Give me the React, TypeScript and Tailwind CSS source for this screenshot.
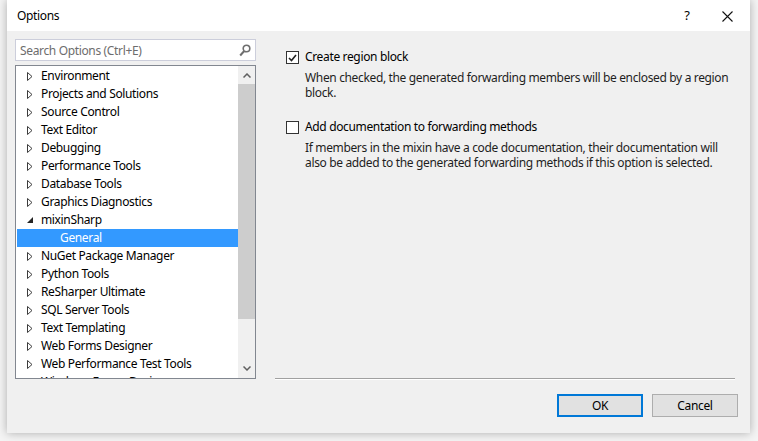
import React from 'react';

const font = { fontFamily: '"Noto Sans", "Open Sans", sans-serif' };

const items = [
  { name: 'Environment' },
  { name: 'Projects and Solutions' },
  { name: 'Source Control' },
  { name: 'Text Editor' },
  { name: 'Debugging' },
  { name: 'Performance Tools' },
  { name: 'Database Tools' },
  { name: 'Graphics Diagnostics' },
  { name: 'mixinSharp', open: true },
  { name: 'General', child: true, selected: true },
  { name: 'NuGet Package Manager' },
  { name: 'Python Tools' },
  { name: 'ReSharper Ultimate' },
  { name: 'SQL Server Tools' },
  { name: 'Text Templating' },
  { name: 'Web Forms Designer' },
  { name: 'Web Performance Test Tools' },
  { name: 'Windows Forms Designer' },
];

const Closed = () => (
  <svg width="6" height="9" viewBox="0 0 6 9" className="shrink-0">
    <path d="M0.5 0.5 L5 4.5 L0.5 8.5 Z" fill="none" stroke="#3c3c3c" strokeWidth="1" />
  </svg>
);

const Open = () => (
  <svg width="6" height="6" viewBox="0 0 6 6" className="shrink-0">
    <path d="M6 0 L6 6 L0 6 Z" fill="#262626" />
  </svg>
);

const Checkbox: React.FC<{ checked?: boolean }> = ({ checked }) => (
  <div className="w-[13px] h-[13px] shrink-0 border border-[#333333] bg-white flex items-center justify-center mt-[2px]">
    {checked && (
      <svg width="9" height="8" viewBox="0 0 9 8">
        <path d="M1 4 L3.5 6.5 L8 1" fill="none" stroke="#222" strokeWidth="1.6" />
      </svg>
    )}
  </div>
);

export default function App() {
  return (
    <div className="w-[758px] h-[441px] bg-[#f4f4f4] text-[12px] tracking-[-0.35px] text-black" style={font}>
      <div className="ml-[7px] w-[743px] h-[433px] bg-[#f0f0f0] flex flex-col shadow-[0_0_9px_rgba(0,0,0,0.3)]">
        {/* Title bar */}
        <div className="h-[31px] bg-white flex items-center pt-[1px] shrink-0">
          <span className="pl-[10px] flex-1">Options</span>
          <span className="w-[20px] text-center mr-[25px] text-[13px]">?</span>
          <svg width="11" height="11" viewBox="0 0 11 11" className="mr-[17px]">
            <path d="M0.5 0.5 L10.5 10.5 M10.5 0.5 L0.5 10.5" stroke="#111" strokeWidth="1.1" />
          </svg>
        </div>

        <div className="flex flex-1 min-h-0">
          {/* Left column */}
          <div className="ml-[8px] w-[241px] pt-[8px] flex flex-col gap-[4px]">
            <div className="h-[22px] border border-[#cccedb] bg-white flex items-center pl-[4px] pr-[4px] pt-[1px]">
              <span className="flex-1 text-[#6d6d6d]">Search Options (Ctrl+E)</span>
              <svg width="12" height="13" viewBox="0 0 12 13">
                <circle cx="7.5" cy="4.5" r="3.3" fill="none" stroke="#6f6f6f" strokeWidth="1.6" />
                <path d="M5.2 7 L1.2 11.5" stroke="#6f6f6f" strokeWidth="2" />
              </svg>
            </div>
            <div className="h-[314px] border border-[#828790] bg-white flex overflow-hidden">
              <div className="flex-1 pt-[1px] pl-[1px] overflow-hidden">
                {items.map((it) => (
                  <div
                    key={it.name}
                    className={`h-[18px] flex items-center whitespace-nowrap ${it.selected ? 'bg-[#3399ff] text-white' : ''}`}
                  >
                    {it.child ? (
                      <span className="pl-[43px]">{it.name}</span>
                    ) : (
                      <>
                        <span className="w-[24px] flex justify-end pr-[8px] items-center">
                          {it.open ? <Open /> : <Closed />}
                        </span>
                        <span>{it.name}</span>
                      </>
                    )}
                  </div>
                ))}
              </div>
              {/* Scrollbar */}
              <div className="w-[17px] bg-[#f0f0f0] flex flex-col items-center shrink-0">
                <div className="h-[18px] flex items-center justify-center">
                  <svg width="8" height="5" viewBox="0 0 8 5">
                    <path d="M0.5 4.5 L4 1 L7.5 4.5" fill="none" stroke="#606060" strokeWidth="1.5" />
                  </svg>
                </div>
                <div className="w-[17px] h-[235px] bg-[#cdcdcd]" />
                <div className="flex-1" />
                <div className="h-[18px] flex items-center justify-center mb-[1px]">
                  <svg width="8" height="5" viewBox="0 0 8 5">
                    <path d="M0.5 0.5 L4 4 L7.5 0.5" fill="none" stroke="#606060" strokeWidth="1.5" />
                  </svg>
                </div>
              </div>
            </div>
          </div>

          {/* Right column */}
          <div className="ml-[19px] flex-1 flex flex-col">
            <div className="flex-1 pl-[11px] pt-[18px] leading-[15px] text-[#1e1e1e]">
              <div className="flex gap-[6px]">
                <Checkbox checked />
                <div className="flex flex-col gap-[6px]">
                  <span className="text-black">Create region block</span>
                  <p className="w-[425px]">
                    When checked, the generated forwarding members will be enclosed by a region block.
                  </p>
                </div>
              </div>
              <div className="flex gap-[6px] mt-[19px]">
                <Checkbox />
                <div className="flex flex-col gap-[6px]">
                  <span className="text-black">Add documentation to forwarding methods</span>
                  <p className="w-[425px]">
                    If members in the mixin have a code documentation, their documentation will also be added to the generated forwarding methods if this option is selected.
                  </p>
                </div>
              </div>
            </div>
            <div className="w-[460px] h-[2px] border-t border-[#a0a0a0] border-b border-b-white" />
            <div className="mt-[14px] mb-[16px] flex justify-end gap-[9px] pr-[12px]">
              <button className="w-[86px] h-[23px] border-2 border-[#0078d7] bg-[#e1e1e1]">OK</button>
              <button className="w-[86px] h-[23px] border border-[#adadad] bg-[#e1e1e1]">Cancel</button>
            </div>
          </div>
        </div>
      </div>
    </div>
  );
}
